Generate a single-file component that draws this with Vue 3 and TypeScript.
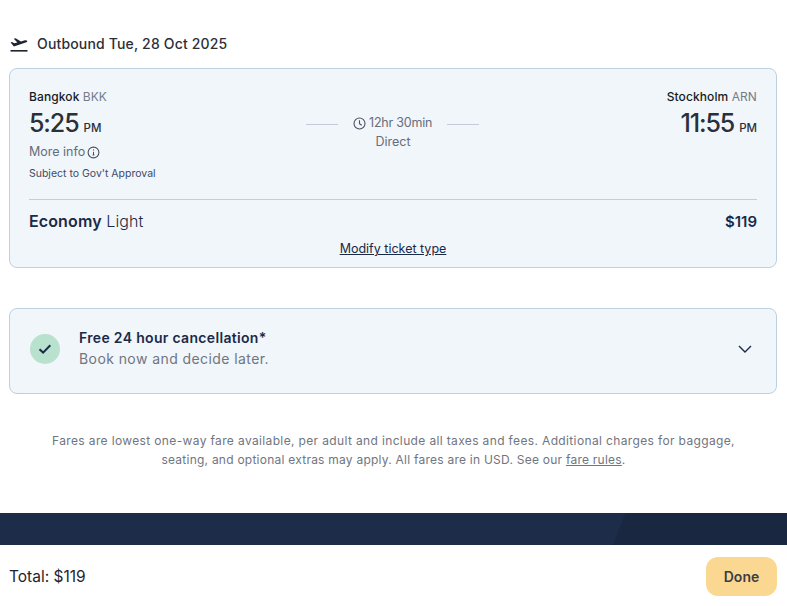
<script setup lang="ts">
const fare = '$119';
</script>

<template>
  <div class="page">
    <header class="leg-title">
      <svg class="plane" width="18" height="18" viewBox="0 0 18 18" fill="#1f2530">
        <path d="M0.6 8.5 L2 8 L4.2 9.3 L7.4 8.4 L3.8 4.7 L5.6 4.2 L10.9 7.5 L14.9 6.3 C16 6 17 6.2 17.2 6.9 C17.4 7.6 16.7 8.1 15.7 8.4 L3.9 12.6 Z" />
        <rect x="0.5" y="16" width="17" height="1.6" />
      </svg>
      <span>Outbound Tue, 28 Oct 2025</span>
    </header>

    <section class="card flight">
      <div class="route">
        <div class="end">
          <div class="city">Bangkok <span class="code">BKK</span></div>
          <div class="time">5:25<small>PM</small></div>
          <div class="more">
            More info
            <svg width="13" height="13" viewBox="0 0 13 13" fill="none" stroke="#4a5261">
              <circle cx="6.5" cy="6.5" r="5.4" stroke-width="1.1" />
              <path d="M6.5 5.8v3.2M5.6 9h1.8" stroke-width="1" />
              <circle cx="6.5" cy="3.9" r="0.6" fill="#4a5261" stroke="none" />
            </svg>
          </div>
          <div class="approval">Subject to Gov't Approval</div>
        </div>

        <div class="duration">
          <div class="duration-row">
            <span class="rule"></span>
            <svg width="13" height="13" viewBox="0 0 13 13" fill="none" stroke="#4a5261" stroke-width="1.1">
              <circle cx="6.5" cy="6.5" r="5.5" />
              <path d="M6.5 3.2v3.5l2.2 1.6" />
            </svg>
            <span class="hours">12hr 30min</span>
            <span class="rule"></span>
          </div>
          <div class="direct">Direct</div>
        </div>

        <div class="end right">
          <div class="city">Stockholm <span class="code">ARN</span></div>
          <div class="time">11:55<small>PM</small></div>
        </div>
      </div>

      <div class="fare">
        <div class="fare-name"><b>Economy</b> Light</div>
        <div class="fare-price">{{ fare }}</div>
      </div>
      <a class="modify">Modify ticket type</a>
    </section>

    <section class="card cancel">
      <span class="tick">
        <svg width="14" height="12" viewBox="0 0 14 12" fill="none" stroke="#1b2a47" stroke-width="2">
          <path d="M1.5 6.2l3.6 3.4 7.2-7.4" />
        </svg>
      </span>
      <div class="cancel-text">
        <div class="cancel-title">Free 24 hour cancellation*</div>
        <div class="cancel-sub">Book now and decide later.</div>
      </div>
      <svg class="chevron" width="14" height="8" viewBox="0 0 14 8" fill="none" stroke="#1b2a47" stroke-width="1.4">
        <path d="M1 1l6 6 6-6" />
      </svg>
    </section>

    <p class="note">
      Fares are lowest one-way fare available, per adult and include all taxes and fees. Additional charges for baggage,<br />
      <span class="note-tail">seating, and optional extras may apply. All fares are in USD. See our <u>fare rules</u>.</span>
    </p>

    <div class="band"></div>

    <footer class="footer">
      <span class="total">Total: {{ fare }}</span>
      <button class="done">Done</button>
    </footer>
  </div>
</template>

<style>
html, body {
  margin: 0;
  background: #fff;
}
</style>

<style scoped>
.page {
  width: 787px;
  height: 606px;
  overflow: hidden;
  display: flex;
  flex-direction: column;
  font-family: "Inter", "Liberation Sans", sans-serif;
  color: #1f2530;
}

.leg-title {
  display: flex;
  align-items: center;
  gap: 9px;
  height: 24px;
  margin: 31px 10px 13px;
  font-size: 14px;
  font-weight: 500;
  letter-spacing: 0.16px;
  color: #2a2f38;
}

.card {
  margin: 0 10px 0 9px;
  background: #f1f6fb;
  border: 1px solid #bcd0e0;
  border-radius: 8px;
  box-sizing: border-box;
}

.flight {
  height: 200px;
  padding: 20px 19px 0;
}

.route {
  display: flex;
  justify-content: space-between;
  height: 111px;
  border-bottom: 1px solid #c3cedd;
  box-sizing: border-box;
}

.end {
  width: 200px;
}

.right {
  text-align: right;
}

.city {
  font-size: 12px;
  line-height: 16px;
  font-weight: 500;
  letter-spacing: 0.1px;
  color: #161b26;
}

.code {
  font-weight: 400;
  color: #757b87;
}

.time {
  margin-top: 3px;
  font-size: 25px;
  line-height: 30px;
  font-weight: 500;
  letter-spacing: -1.1px;
  color: #2a2f38;
}

.time small {
  margin-left: 5px;
  font-size: 11.5px;
  font-weight: 500;
  letter-spacing: 0;
}

.more {
  display: flex;
  align-items: center;
  gap: 2px;
  margin-top: 0;
  font-size: 12.5px;
  line-height: 18px;
  color: #666d7a;
}

.approval {
  margin-top: 5px;
  font-size: 10.5px;
  line-height: 16px;
  color: #3f4a66;
}

.duration {
  width: 174px;
  margin-top: 25px;
  text-align: center;
  font-size: 12.5px;
  line-height: 18px;
  color: #666d7a;
}

.duration-row {
  display: flex;
  align-items: center;
  white-space: nowrap;
}

.duration-row svg {
  flex: none;
  margin-right: 3px;
}

.rule {
  flex: none;
  width: 32px;
  height: 1px;
  margin-top: 3px;
  background: #c3cad8;
}

.rule:first-child {
  margin-right: 15px;
}

.hours {
  margin-right: 15px;
  letter-spacing: -0.2px;
}

.direct {
  margin-top: 1px;
}

.fare {
  display: flex;
  justify-content: space-between;
  align-items: center;
  margin-top: 9px;
  height: 24px;
  font-size: 16px;
  letter-spacing: 0.12px;
  color: #1b2a47;
}

.fare-name {
  font-weight: 300;
}

.fare-name b {
  font-weight: 600;
}

.fare-price {
  font-size: 15px;
  font-weight: 600;
  letter-spacing: 0;
}

.modify {
  display: block;
  width: fit-content;
  margin: 7px auto 0;
  font-size: 12.5px;
  line-height: 18px;
  text-decoration: underline;
  color: #1b2a47;
}

.cancel {
  display: flex;
  align-items: center;
  height: 86px;
  margin-top: 40px;
  padding: 0 24px 4px 20px;
}

.tick {
  display: flex;
  align-items: center;
  justify-content: center;
  width: 30px;
  height: 30px;
  border-radius: 50%;
  background: #b8e2cd;
}

.cancel-text {
  flex: 1;
  margin: 0 0 2px 19px;
}

.cancel-title {
  font-size: 14px;
  line-height: 21px;
  font-weight: 600;
  letter-spacing: 0.32px;
  color: #1b2a47;
}

.cancel-sub {
  font-size: 14px;
  line-height: 21px;
  letter-spacing: 0.42px;
  color: #70757f;
}

.chevron {
  flex: none;
}

.note {
  margin: 37px 0 0;
  text-align: center;
  font-size: 12px;
  line-height: 19px;
  letter-spacing: 0.36px;
  color: #70757f;
}

.note-tail {
  letter-spacing: 0.24px;
}

.band {
  flex: none;
  height: 32px;
  margin-top: 44px;
  background: linear-gradient(112deg, #1d2c48 0 78.2%, #1a2740 78.2% 100%);
}

.footer {
  flex: none;
  display: flex;
  justify-content: space-between;
  align-items: center;
  height: 61px;
  padding: 2px 10px 0 9px;
  box-sizing: border-box;
}

.total {
  font-size: 15.5px;
  color: #1f2530;
}

.done {
  width: 71px;
  height: 39px;
  border: none;
  border-radius: 12px;
  background: #fbd892;
  font-family: inherit;
  font-size: 14px;
  font-weight: 600;
  color: #3a3d45;
}
</style>
